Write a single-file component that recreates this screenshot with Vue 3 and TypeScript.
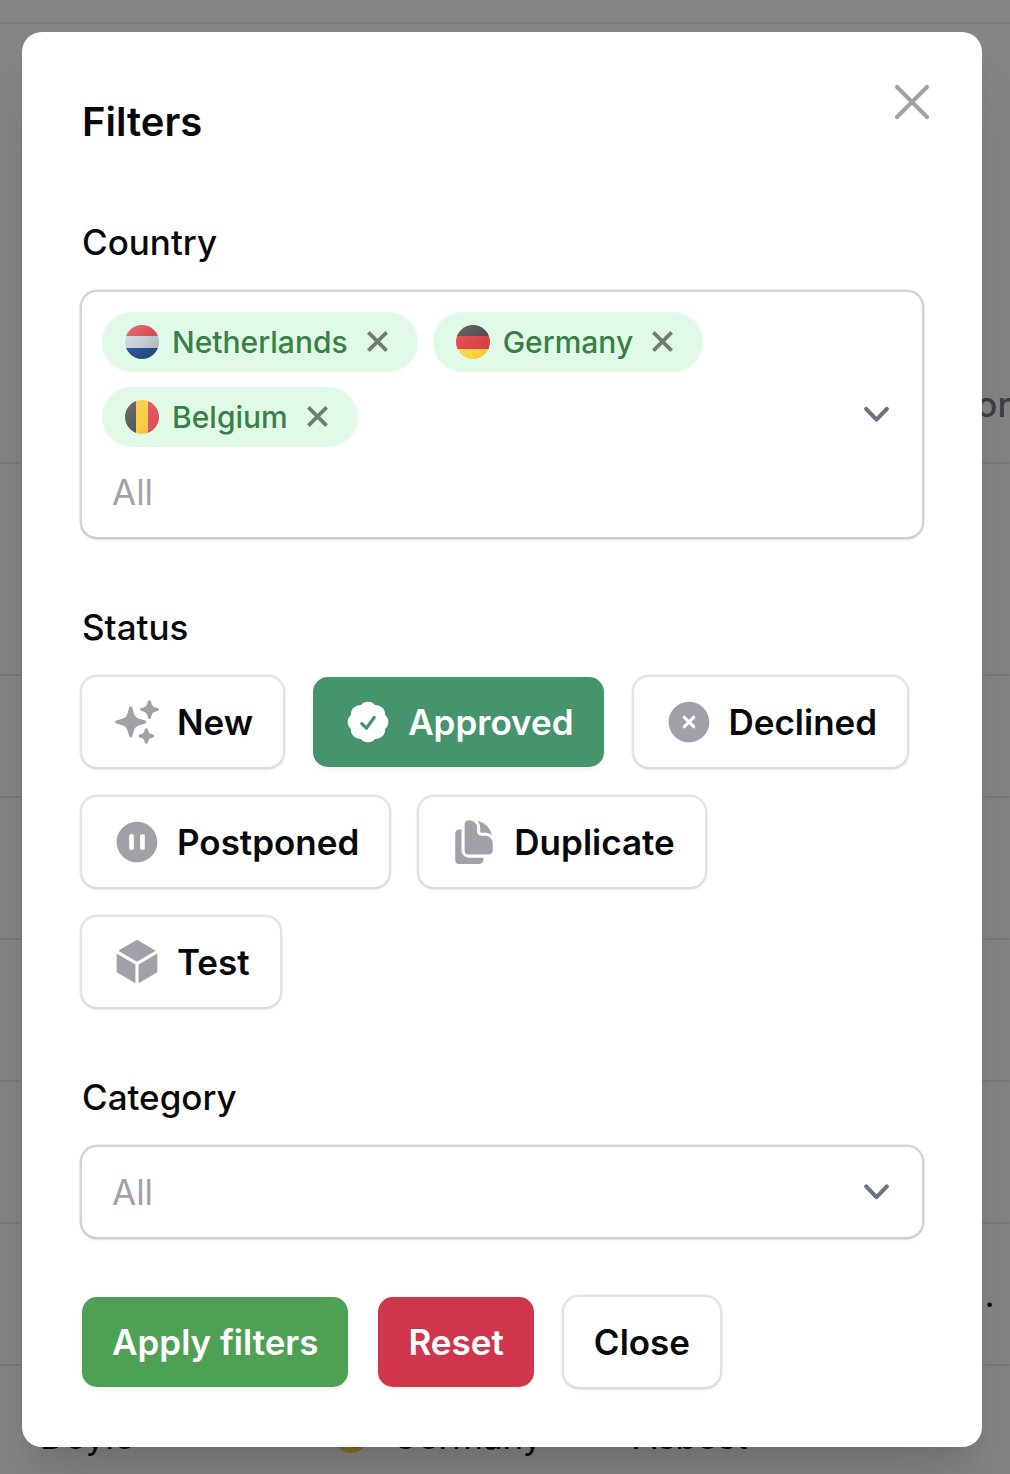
<script setup lang="ts">
import { ref } from 'vue'

interface Chip {
  code: string
  name: string
}

interface Status {
  name: string
  paths: string[]
}

const chips = ref<Chip[]>([
  { code: 'nl', name: 'Netherlands' },
  { code: 'de', name: 'Germany' },
  { code: 'be', name: 'Belgium' },
])

const selected = ref('Approved')

const statuses: Status[] = [
  {
    name: 'New',
    paths: [
      'M9 4.5a.75.75 0 0 1 .721.544l.813 2.846a3.75 3.75 0 0 0 2.576 2.576l2.846.813a.75.75 0 0 1 0 1.442l-2.846.813a3.75 3.75 0 0 0-2.576 2.576l-.813 2.846a.75.75 0 0 1-1.442 0l-.813-2.846a3.75 3.75 0 0 0-2.576-2.576l-2.846-.813a.75.75 0 0 1 0-1.442l2.846-.813A3.75 3.75 0 0 0 7.466 7.89l.813-2.846A.75.75 0 0 1 9 4.5ZM18 1.5a.75.75 0 0 1 .728.568l.258 1.036c.236.94.97 1.674 1.91 1.91l1.036.258a.75.75 0 0 1 0 1.456l-1.036.258c-.94.236-1.674.97-1.91 1.91l-.258 1.036a.75.75 0 0 1-1.456 0l-.258-1.036a2.625 2.625 0 0 0-1.91-1.91l-1.036-.258a.75.75 0 0 1 0-1.456l1.036-.258a2.625 2.625 0 0 0 1.91-1.91l.258-1.036A.75.75 0 0 1 18 1.5ZM16.5 15a.75.75 0 0 1 .712.513l.394 1.183c.15.447.5.799.948.948l1.183.395a.75.75 0 0 1 0 1.422l-1.183.395c-.447.15-.799.5-.948.948l-.395 1.183a.75.75 0 0 1-1.422 0l-.395-1.183a1.5 1.5 0 0 0-.948-.948l-1.183-.395a.75.75 0 0 1 0-1.422l1.183-.395c.447-.15.799-.5.948-.948l.395-1.183A.75.75 0 0 1 16.5 15Z',
    ],
  },
  {
    name: 'Approved',
    paths: [
      'M8.603 3.799A4.49 4.49 0 0 1 12 2.25c1.357 0 2.573.6 3.397 1.549a4.49 4.49 0 0 1 3.498 1.307 4.491 4.491 0 0 1 1.307 3.497A4.49 4.49 0 0 1 21.75 12a4.49 4.49 0 0 1-1.549 3.397 4.491 4.491 0 0 1-1.307 3.497 4.491 4.491 0 0 1-3.497 1.307A4.49 4.49 0 0 1 12 21.75a4.49 4.49 0 0 1-3.397-1.549 4.49 4.49 0 0 1-3.498-1.306 4.491 4.491 0 0 1-1.307-3.498A4.49 4.49 0 0 1 2.25 12c0-1.357.6-2.573 1.549-3.397a4.49 4.49 0 0 1 1.307-3.497 4.49 4.49 0 0 1 3.497-1.307Zm7.007 6.387a.75.75 0 1 0-1.22-.872l-3.236 4.53L9.53 12.22a.75.75 0 0 0-1.06 1.06l2.25 2.25a.75.75 0 0 0 1.14-.094l3.75-5.25Z',
    ],
  },
  {
    name: 'Declined',
    paths: [
      'M12 2.25c-5.385 0-9.75 4.365-9.75 9.75s4.365 9.75 9.75 9.75 9.75-4.365 9.75-9.75S17.385 2.25 12 2.25Zm-1.72 6.97a.75.75 0 1 0-1.06 1.06L10.94 12l-1.72 1.72a.75.75 0 1 0 1.06 1.06L12 13.06l1.72 1.72a.75.75 0 1 0 1.06-1.06L13.06 12l1.72-1.72a.75.75 0 1 0-1.06-1.06L12 10.94l-1.72-1.72Z',
    ],
  },
  {
    name: 'Postponed',
    paths: [
      'M2.25 12c0-5.385 4.365-9.75 9.75-9.75s9.75 4.365 9.75 9.75-4.365 9.75-9.75 9.75S2.25 17.385 2.25 12ZM9 8.25a.75.75 0 0 0-.75.75v6c0 .414.336.75.75.75h.75a.75.75 0 0 0 .75-.75V9a.75.75 0 0 0-.75-.75H9Zm5.25 0a.75.75 0 0 0-.75.75v6c0 .414.336.75.75.75H15a.75.75 0 0 0 .75-.75V9a.75.75 0 0 0-.75-.75h-.75Z',
    ],
  },
  {
    name: 'Duplicate',
    paths: [
      'M7.5 3.375c0-1.036.84-1.875 1.875-1.875h.375a3.75 3.75 0 0 1 3.75 3.75v1.875C13.5 8.161 14.34 9 15.375 9h1.875A3.75 3.75 0 0 1 21 12.75v3.375C21 17.16 20.16 18 19.125 18h-9.75A1.875 1.875 0 0 1 7.5 16.125V3.375Z',
      'M15 5.25a5.23 5.23 0 0 0-1.279-3.434 9.768 9.768 0 0 1 6.963 6.963A5.23 5.23 0 0 0 17.25 7.5h-1.875A.375.375 0 0 1 15 7.125V5.25ZM4.875 6H6v10.125A3.375 3.375 0 0 0 9.375 19.5H16.5v1.125c0 1.035-.84 1.875-1.875 1.875h-9.75A1.875 1.875 0 0 1 3 20.625V7.875C3 6.839 3.84 6 4.875 6Z',
    ],
  },
  {
    name: 'Test',
    paths: [
      'M12.378 1.602a.75.75 0 0 0-.756 0L3 6.632l9 5.25 9-5.25-8.622-5.03ZM21.75 7.93l-9 5.25v9l8.628-5.032a.75.75 0 0 0 .372-.648V7.93ZM11.25 22.18v-9l-9-5.25v8.57a.75.75 0 0 0 .372.648l8.628 5.033Z',
    ],
  },
]

function removeChip(code: string): void {
  chips.value = chips.value.filter((c) => c.code !== code)
}
</script>

<template>
  <div class="screen">
    <div class="page" aria-hidden="true">
      <div class="row top"></div>
      <div class="row head"><span>or</span></div>
      <div class="row r212"></div>
      <div class="row r122"></div>
      <div class="row"></div>
      <div class="row"></div>
      <div class="row"></div>
      <div class="row end"><span>.</span></div>
      <div class="row last">
        <span class="c1">Doyle</span>
        <span class="c2"><i class="flag de"></i>Germany</span>
        <span>Asbest</span>
      </div>
    </div>
    <div class="backdrop">
      <section class="modal" role="dialog" aria-label="Filters">
        <header class="header">
          <h2>Filters</h2>
          <button class="dismiss" aria-label="Close dialog">
            <svg viewBox="0 0 24 24" fill="none" stroke="currentColor" stroke-width="1.65" stroke-linecap="round" stroke-linejoin="round">
              <path d="M6 18 18 6M6 6l12 12" />
            </svg>
          </button>
        </header>

        <div class="field">
          <label>Country</label>
          <div class="select multi">
            <div class="values">
              <span v-for="c in chips" :key="c.code" class="chip">
                <i class="flag" :class="c.code"></i>
                <span>{{ c.name }}</span>
                <svg class="remove" viewBox="0 0 21 21" fill="none" stroke="currentColor" stroke-width="3.7" @click="removeChip(c.code)">
                  <path d="M1.4 1.4 19.6 19.6M19.6 1.4 1.4 19.6" />
                </svg>
              </span>
              <span class="placeholder">All</span>
            </div>
            <svg class="chevron" viewBox="0 0 20 20" fill="none" stroke="currentColor" stroke-width="1.65" stroke-linecap="round" stroke-linejoin="round">
              <path d="M6.06 7.55 10.2 11.85 14.34 7.55" />
            </svg>
          </div>
        </div>

        <div class="field">
          <label>Status</label>
          <div class="statuses">
            <button
              v-for="s in statuses"
              :key="s.name"
              class="btn"
              :class="selected === s.name ? 'approved' : 'outline'"
              @click="selected = s.name"
            >
              <svg class="icon" viewBox="0 0 24 24" fill="currentColor">
                <path v-for="p in s.paths" :key="p" :d="p" fill-rule="evenodd" clip-rule="evenodd" />
              </svg>
              <span>{{ s.name }}</span>
            </button>
          </div>
        </div>

        <div class="field">
          <label>Category</label>
          <div class="select single">
            <span class="placeholder">All</span>
            <svg class="chevron" viewBox="0 0 20 20" fill="none" stroke="currentColor" stroke-width="1.65" stroke-linecap="round" stroke-linejoin="round">
              <path d="M6.06 7.75 10.2 12.05 14.34 7.75" />
            </svg>
          </div>
        </div>

        <footer class="actions">
          <button class="btn apply">Apply filters</button>
          <button class="btn reset">Reset</button>
          <button class="btn outline">Close</button>
        </footer>
      </section>
    </div>
  </div>
</template>

<style>
body {
  margin: 0;
}
</style>

<style scoped>
.screen {
  position: relative;
  box-sizing: border-box;
  width: 1010px;
  height: 1474px;
  overflow: hidden;
  background: #fff;
  color: #09090b;
  font-family: Inter, 'Liberation Sans', sans-serif;
  font-size: 35px;
  line-height: 50px;
}

.screen * {
  box-sizing: border-box;
}

.page {
  display: flex;
  flex-direction: column;
}

.row {
  display: flex;
  flex: none;
  align-items: center;
  height: 142px;
  border-bottom: 2px solid #e6e6e7;
}

.row.top {
  height: 24px;
}

.row.head {
  height: 440px;
  align-items: flex-end;
  justify-content: flex-end;
  padding: 0 0 33px;
  color: #71717a;
  font-weight: 500;
}

.row.head span {
  margin-right: -1px;
}

.row.r212 {
  height: 212px;
}

.row.r122 {
  height: 122px;
}

.row.end {
  justify-content: flex-end;
  padding-right: 15.5px;
}

.row.last {
  padding-left: 40px;
}

.c1 {
  width: 294px;
}

.c2 {
  display: flex;
  align-items: center;
  gap: 24px;
  width: 299px;
}

.backdrop {
  position: absolute;
  inset: 0;
  padding: 32px 28px 27px 22px;
  background: rgba(9, 9, 11, 0.5);
}

.modal {
  width: 960px;
  height: 1415px;
  padding: 60px;
  border-radius: 20px;
  background: #fff;
  box-shadow:
    0 50px 62.5px -12.5px rgba(0, 0, 0, 0.1),
    0 20px 25px -15px rgba(0, 0, 0, 0.1);
}

.header {
  display: flex;
  justify-content: space-between;
  height: 60px;
}

h2 {
  margin: 0;
  font-size: 40px;
  font-weight: 600;
  line-height: 60px;
}

button {
  margin: 0;
  border: 0;
  background: none;
  font: inherit;
  color: inherit;
}

.dismiss {
  width: 60px;
  height: 60px;
  margin: -20px -20px 0 0;
  padding: 0;
  color: #a1a1aa;
}

.dismiss svg {
  display: block;
  width: 60px;
  height: 60px;
}

.field {
  margin-top: 65px;
}

label {
  display: block;
  height: 50px;
  margin-bottom: 25px;
  font-weight: 500;
}

.select {
  display: flex;
  align-items: center;
  justify-content: space-between;
  width: 840px;
  padding-right: 21px;
  border-radius: 15px;
  background: #fff;
  box-shadow:
    0 0 0 2.5px rgba(9, 9, 11, 0.16),
    0 2.5px 5px rgba(0, 0, 0, 0.05);
}

.multi {
  height: 245px;
  padding-left: 20px;
}

.single {
  height: 90px;
  padding-left: 30px;
}

.values {
  display: flex;
  flex-wrap: wrap;
  gap: 15px;
  width: 700px;
  padding-top: 5px;
}

.placeholder {
  color: #a1a1aa;
}

.values .placeholder {
  width: 100%;
  height: 60px;
  padding-left: 10px;
  line-height: 60px;
}

.chip {
  display: flex;
  align-items: center;
  height: 60px;
  padding: 0 30px 0 23px;
  border-radius: 30px;
  background: #e1fae8;
  color: #388044;
  font-size: 30px;
  font-weight: 500;
  line-height: 40px;
}

.chip .flag {
  margin-right: 13px;
}

.remove {
  width: 21px;
  height: 21px;
  margin: 0 0 1px 19px;
  color: #6e7d71;
}

.flag {
  position: relative;
  width: 34px;
  height: 34px;
  border-radius: 50%;
  overflow: hidden;
}

.flag.nl {
  background: linear-gradient(#e0525a 0 32%, #ced4dc 32% 68%, #295797 68%);
}

.flag.de {
  background: linear-gradient(#4c4c4c 0 31%, #dc4046 31% 70%, #fad43f 70%);
}

.flag.be {
  background: linear-gradient(90deg, #555 0 33%, #f9cc45 33% 68%, #e0525a 68%);
}

/* diagonal shading across the flag */
.flag::after {
  content: '';
  position: absolute;
  inset: 0;
  background: linear-gradient(135deg, rgba(255, 255, 255, 0.14), rgba(255, 255, 255, 0.02) 60%, rgba(0, 0, 0, 0.06));
}

.flag.nl::after {
  background: linear-gradient(135deg, rgba(255, 255, 255, 0.2), rgba(0, 0, 0, 0.02) 45%, rgba(0, 0, 0, 0.2));
}

.chevron {
  flex: none;
  width: 50px;
  height: 50px;
  color: #6b7280;
}

.statuses {
  display: flex;
  flex-wrap: wrap;
  gap: 30px;
}

.btn {
  display: flex;
  align-items: center;
  gap: 15px;
  height: 90px;
  padding: 0 30px;
  border-radius: 15px;
  font-weight: 600;
  white-space: nowrap;
  box-shadow: 0 2.5px 5px rgba(0, 0, 0, 0.05);
}

.outline {
  background: #fff;
  box-shadow:
    0 0 0 2.5px rgba(9, 9, 11, 0.1),
    0 2.5px 5px rgba(0, 0, 0, 0.05);
}

.icon {
  width: 50px;
  height: 50px;
  color: #a1a1aa;
}

.approved {
  background: #45946c;
  color: #fff;
}

.approved .icon {
  color: #fff;
}

.actions {
  display: flex;
  gap: 30px;
  margin-top: 60px;
}

.apply {
  background: #4ea154;
  color: #fff;
}

.reset {
  background: #cf364c;
  color: #fff;
}
</style>
